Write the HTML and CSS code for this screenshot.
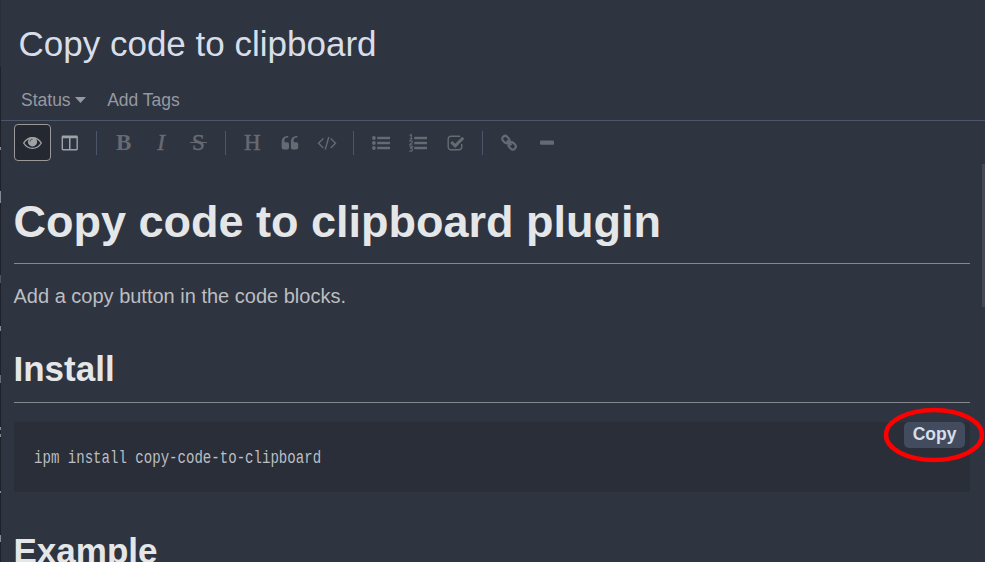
FILE: index.html
```html
<!DOCTYPE html>
<html lang="en">
<head>
<meta charset="utf-8">
<title>Copy code to clipboard</title>
<link rel="stylesheet" href="styles.css">
</head>
<body>
<div class="app">
  <div class="edge"><i class="e1"></i><i class="e2"></i><i class="e3"></i><i class="e4"></i><i class="e5"></i><i class="e6"></i><i class="e7"></i><i class="e8"></i><i class="e9"></i></div>
  <main class="note">
    <header class="title">Copy code to clipboard</header>
    <div class="meta"><span>Status</span><svg class="caret" width="11" height="6" viewBox="0 0 11 6"><path d="M0 0h11L5.5 6z"/></svg><span class="tags">Add Tags</span></div>
    <nav class="toolbar">
      <span class="tool active"><svg width="20" height="16" viewBox="0 0 20 16"><path d="M1.2 8C5.4.9 14.6.9 18.8 8 14.6 15.1 5.400 15.100 1.200 8z" fill="none" stroke="currentColor" stroke-width="1.400"/><circle cx="10" cy="6.800" r="4.600"/><path d="M7.500 6.700c0-1.500 1-2.500 2.500-2.500" fill="none" stroke="#242831" stroke-width=".8"/></svg></span>
      <span class="tool bright"><svg width="18" height="16" viewBox="0 0 18 16"><path fill-rule="evenodd" d="M2 .5h13.500a1.400 1.400 0 0 1 1.400 1.400v12.200a1.400 1.400 0 0 1-1.400 1.400H2A1.400 1.400 0 0 1 .6 14.100V1.900A1.400 1.400 0 0 1 2 .5zM2 3.200v10.900h6V3.200zm7.500 0v10.900h6V3.200z"/></svg></span>
      <i class="sep"></i>
      <span class="tool letter bold">B</span>
      <span class="tool letter italic">I</span>
      <span class="tool letter strike">S</span>
      <i class="sep"></i>
      <span class="tool letter">H</span>
      <span class="tool"><svg width="18" height="16" viewBox="0 0 18 16"><path id="q" d="M7.200 1v1.600H6.400a3 3 0 0 0-3 3v.6c0 .6.4 1 1 1h1.700a1.900 1.900 0 0 1 1.900 1.900v3.500a1.900 1.900 0 0 1-1.900 1.900H2.600A1.900 1.900 0 0 1 .7 12.600V6.300A5.300 5.300 0 0 1 6 1z"/><use href="#q" x="9.200"/></svg></span>
      <span class="tool"><svg width="20" height="16" viewBox="0 0 20 16"><path d="M6.300 3.500 1.500 8.300l4.800 4.800M13.700 3.500l4.800 4.800-4.800 4.800M11.800 2 8.200 14.600" fill="none" stroke="currentColor" stroke-width="1.400"/></svg></span>
      <i class="sep"></i>
      <span class="tool"><svg width="18" height="16" viewBox="0 0 18 16"><circle cx="1.900" cy="3" r="1.900"/><circle cx="1.900" cy="8" r="1.900"/><circle cx="1.900" cy="13" r="1.900"/><path d="M5.200 1.800H18v2.500H5.200zM5.200 6.800H18v2.500H5.200zM5.200 11.800H18v2.500H5.200z"/></svg></span>
      <span class="tool"><svg width="18" height="18" viewBox="0 0 18 18"><path d="M5.200 2.800H18v2.500H5.200zM5.200 7.800H18v2.500H5.200zM5.200 12.800H18v2.500H5.200z"/><path d="M.7 1.500 2.200.6v4.200M.7 4.900h3M.5 7.500C1 6.300 3.300 6.500 3.300 7.900c0 1.300-2.600 1.700-2.600 3.100h2.900M.6 12.800h2.900L2 14.500c2.200 0 2 2.700 0 2.700-.6 0-1.200-.2-1.600-.5" fill="none" stroke="currentColor" stroke-width="1.200"/></svg></span>
      <span class="tool"><svg width="18" height="16" viewBox="0 0 18 16"><path d="M14.700 9v3a2.700 2.700 0 0 1-2.700 2.700H3.900A2.700 2.700 0 0 1 1.200 12V4A2.700 2.700 0 0 1 3.900 1.300H12c.5 0 .9.100 1.200.300" fill="none" stroke="currentColor" stroke-width="1.400"/><path d="m4.300 7 3.900 3.900L16.300 2.800" fill="none" stroke="currentColor" stroke-width="3"/></svg></span>
      <i class="sep"></i>
      <span class="tool"><svg width="18" height="18" viewBox="0 0 18 18"><g fill="none" stroke="currentColor" stroke-width="2.200"><rect x="2" y="2.600" width="7.600" height="5.800" rx="2.800" transform="rotate(45 5.800 5.500)"/><rect x="8.400" y="9" width="7.600" height="5.800" rx="2.800" transform="rotate(45 12.200 11.900)"/><path d="m6.800 6.500 4.600 4.600"/></g></svg></span>
      <span class="tool"><svg width="14" height="16" viewBox="0 0 14 16"><rect y="5.600" width="14" height="4.200" rx="1"/></svg></span>
    </nav>
    <article class="content">
      <h1>Copy code to clipboard plugin</h1>
      <p>Add a copy button in the code blocks.</p>
      <h2>Install</h2>
      <div class="codeblock">
        <pre><code>ipm install copy-code-to-clipboard</code></pre>
        <button class="copy">Copy</button>
        <svg class="ring" width="102" height="56" viewBox="0 0 102 56"><ellipse cx="51" cy="28" rx="48" ry="25"/></svg>
      </div>
      <h2>Example</h2>
    </article>
    <i class="scrollbar"></i>
  </main>
</div>
</body>
</html>
```
FILE: styles.css
```css
* { box-sizing: border-box; }
body { margin: 0; overflow: hidden; background: #2e3440; font-family: "Liberation Sans", Arial, sans-serif; }
.app { display: flex; height: 562px; overflow: hidden; }
.edge { position: relative; width: 1px; background: linear-gradient(#292e38 67px, #1d2129 67px); }
.edge i { position: absolute; left: 0; width: 1px; height: 3px; background: #858991; }
.edge .e1 { top: 147px; }
.edge .e2 { top: 191px; height: 12px; }
.edge .e3 { top: 275px; height: 8px; background: #50545c; }
.edge .e4 { top: 326px; height: 5px; }
.edge .e5 { top: 375px; height: 8px; background: #666a72; }
.edge .e6 { top: 427px; }
.edge .e7 { top: 434px; }
.edge .e8 { top: 491px; height: 2px; }
.edge .e9 { top: 535px; height: 7px; }
.note { position: relative; flex: 1; height: 562px; overflow: hidden; }
.title { height: 88px; padding-left: 17.500px; line-height: 88px; font-size: 35px; color: #d8dee9; }
.meta { display: flex; align-items: center; height: 33px; padding: 0 0 8px 20px; border-bottom: 1px solid #4c566a; font-size: 17.500px; line-height: 24px; color: #9699a1; }
.caret { margin-left: 4.500px; fill: currentColor; }
.tags { margin-left: 21px; }
.toolbar { display: flex; align-items: center; height: 44px; padding: 0 13px 1px; color: #666a72; }
.tool { display: flex; flex: none; align-items: center; justify-content: center; width: 37px; height: 37px; margin-right: .4px; }
.tool svg { fill: currentColor; overflow: visible; }
.active { background: #242831; border: 1px solid #999; border-radius: 4px; color: #a0a2a5; }
.active svg { transform: translateX(-.5px); }
.bright { color: #a0a2a5; }
.sep { flex: none; width: 1px; height: 24px; margin: 0 8px 0 7.400px; background: #4c566a; }
.letter { font: 23px "Liberation Serif", serif; -webkit-text-stroke: .5px currentColor; }
.letter.bold { font-weight: bold; -webkit-text-stroke: 0; }
.letter.italic { font-style: italic; }
.letter.strike { position: relative; }
.strike::after { content: ""; position: absolute; left: 10px; top: 18px; width: 17px; height: 1px; background: currentColor; }
.content { padding: 30px 15px 0 13px; font-size: 20px; color: #bcbec2; }
h1, h2 { margin: 0; color: #e5e6e8; border-bottom: 1px solid #85888e; text-indent: -.5px; }
h1 { height: 69px; font-size: 45px; line-height: 54px; }
h2 { height: 56px; font-size: 35px; line-height: 44px; }
p { margin: 18px 0 37px; height: 28px; line-height: 28px; text-indent: -.5px; }
.codeblock { position: relative; height: 70px; margin: 19px 0 37px; padding: 20px; border-radius: 4px; background: #292e39; }
pre { margin: 0; line-height: 28px; }
code { display: inline-block; font: 17.500px/28px "Liberation Mono", monospace; transform: scaleX(.804); transform-origin: 0 0; }
.copy { position: absolute; top: 0; right: 5px; width: 61px; height: 26px; padding: 0 0 2px; border: 0; border-radius: 5px; background: #434c5e; color: #d8dee9; font: bold 17.500px/24px "Liberation Sans", sans-serif; }
.ring { position: absolute; top: -15px; right: -15px; fill: none; stroke: red; stroke-width: 4.500px; }
.scrollbar { position: absolute; right: 0; top: 164px; width: 3px; height: 143px; background: #434852; }
```
